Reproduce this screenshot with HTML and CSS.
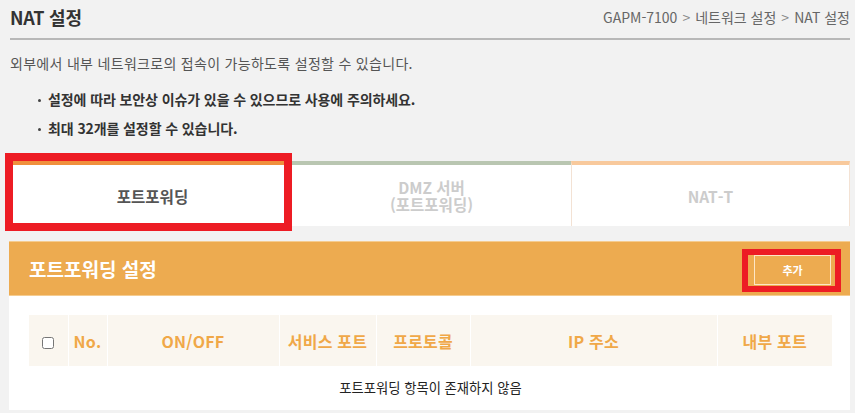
FILE: index.html
```html
<!DOCTYPE html>
<html lang="ko">
<head>
    <meta charset="UTF-8">
    <meta name="viewport" content="width=device-width, initial-scale=1.0">
    <title>NAT 설정</title>
    <link rel="stylesheet" href="styles.css">
</head>
<body>
    <div class="page">
        <!-- Title and breadcrumb -->
        <div class="top">
            <h1 class="title">NAT 설정</h1>
            <div class="crumb">GAPM-7100<span class="sep">&gt;</span>네트워크 설정<span class="sep">&gt;</span>NAT 설정</div>
        </div>

        <p class="desc">외부에서 내부 네트워크로의 접속이 가능하도록 설정할 수 있습니다.</p>
        <ul class="notes">
            <li>설정에 따라 보안상 이슈가 있을 수 있으므로 사용에 주의하세요.</li>
            <li>최대 32개를 설정할 수 있습니다.</li>
        </ul>

        <!-- Tabs -->
        <div class="tabs">
            <div class="tab tab-active">포트포워딩<span class="mark mark-tab"></span></div>
            <div class="tab tab-dmz">
                <span class="tab-line">DMZ 서버</span>
                <span class="tab-line">(포트포워딩)</span>
            </div>
            <div class="tab tab-natt">NAT-T</div>
        </div>

        <!-- Port forwarding panel -->
        <div class="panel">
            <div class="panel-head">
                <h2 class="panel-title">포트포워딩 설정</h2>
                <button class="add-btn">추가<span class="mark mark-btn"></span></button>
            </div>
            <div class="panel-body">
                <table class="list">
                    <thead>
                        <tr>
                            <th class="c-check"><input type="checkbox"></th>
                            <th class="c-no">No.</th>
                            <th class="c-onoff">ON/OFF</th>
                            <th class="c-svc">서비스 포트</th>
                            <th class="c-proto">프로토콜</th>
                            <th class="c-ip">IP 주소</th>
                            <th class="c-inner">내부 포트</th>
                        </tr>
                    </thead>
                    <tbody>
                        <tr>
                            <td class="empty" colspan="7">포트포워딩 항목이 존재하지 않음</td>
                        </tr>
                    </tbody>
                </table>
            </div>
        </div>
    </div>
</body>
</html>
```

FILE: styles.css
```css
/* Basic Reset */
* {
    box-sizing: border-box;
    margin: 0;
    padding: 0;
}

body {
    font-family: "Noto Sans CJK KR", "Noto Sans", sans-serif;
    background: #f2f2f2;
    color: #333;
}

.page {
    padding: 0 5px 0 10px;
}

/* Header */
.top {
    display: flex;
    justify-content: space-between;
    align-items: center;
    height: 40px;
    border-bottom: 2px solid #b8b8b8;
    padding-bottom: 4px;
}

.title {
    font-size: 18px;
    font-weight: bold;
    color: #333;
    letter-spacing: -0.2px;
}

.crumb {
    font-size: 14px;
    color: #666;
    letter-spacing: 0;
}

.crumb .sep {
    margin: 0 5px;
    color: #888;
}

.desc {
    margin-top: 13px;
    font-size: 14px;
    line-height: 20px;
    color: #555;
    letter-spacing: 0.3px;
}

.notes {
    list-style: none;
    margin-top: 16px;
    padding-left: 28px;
}

.notes li {
    position: relative;
    padding-left: 10px;
    font-size: 14px;
    font-weight: bold;
    line-height: 20px;
    color: #333;
    letter-spacing: -0.1px;
}

.notes li + li {
    margin-top: 9px;
}

.notes li::before {
    content: "";
    position: absolute;
    left: 0;
    top: 10px;
    width: 3px;
    height: 3px;
    border-radius: 50%;
    background: #444;
}

/* Tabs */
.tabs {
    display: grid;
    grid-template-columns: 279px 279px 279px;
    margin: 23px 0 0 3px;
}

.tab {
    position: relative;
    height: 65px;
    display: flex;
    flex-direction: column;
    align-items: center;
    justify-content: center;
    text-align: center;
    background: #fff;
    border-top: 4px solid #f0903c;
    font-size: 15.5px;
    font-weight: bold;
    line-height: 18px;
    color: #ccc;
}

.tab-line {
    display: block;
    line-height: 17px;
}

.tab-active {
    color: #555;
}

.tab-dmz {
    border-top-color: #b9c6b1;
    padding-top: 1px;
}

.tab-natt {
    border-top-color: #f8c99c;
    border-left: 1px solid #f3e2d4;
    border-right: 1px solid #f3e2d4;
}

/* Red annotation boxes */
.mark {
    position: absolute;
    border-style: solid;
    border-color: #ed1c24;
    pointer-events: none;
}

.mark-tab {
    left: -8px;
    top: -12px;
    width: 287px;
    height: 78px;
    border-width: 8px;
}

.mark-btn {
    left: -13px;
    top: -7px;
    width: 99px;
    height: 43px;
    border-width: 6px;
}

/* Panel */
.panel {
    margin: 15px 0 0 -1px;
    background: #fff;
}

.panel-head {
    display: flex;
    justify-content: space-between;
    align-items: center;
    height: 55px;
    padding: 0 19px 0 20px;
    background: #edab50;
    border-top: 1px solid #f5cc90;
    border-bottom: 1px solid #f5cc90;
}

.panel-title {
    font-size: 19px;
    font-weight: bold;
    color: #fff;
}

.add-btn {
    position: relative;
    width: 77px;
    height: 30px;
    border: 1px solid #fde6c6;
    background: transparent;
    color: #fff;
    font-family: inherit;
    font-size: 11px;
    font-weight: bold;
    margin-top: 2px;
}

.panel-body {
    padding: 19px 19px 2px 20px;
}

.list {
    width: 100%;
    table-layout: fixed;
    border-collapse: collapse;
}

.list th {
    height: 51px;
    background: #faf6ef;
    border-left: 1px solid #fff;
    font-size: 16px;
    font-weight: bold;
    color: #f0a848;
    letter-spacing: 0.2px;
}

.list th:first-child {
    border-left: none;
}

.list th input {
    width: 12px;
    height: 12px;
    margin: 0;
    vertical-align: middle;
}

.c-check { width: 39px; }
.c-no { width: 39px; }
.c-onoff { width: 172px; }
.c-svc { width: 97px; }
.c-proto { width: 94px; }
.c-ip { width: 247px; }
.c-inner { width: 115px; }

.empty {
    height: 42px;
    text-align: center;
    font-size: 13.3px;
    color: #222;
}
```
